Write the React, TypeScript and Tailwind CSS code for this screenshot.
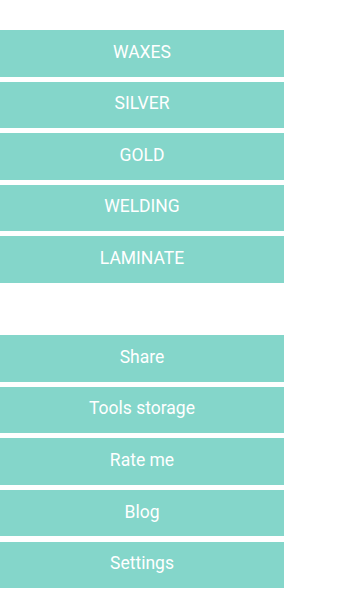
const groupA = ['WAXES', 'SILVER', 'GOLD', 'WELDING', 'LAMINATE'];
const groupB = ['Share', 'Tools storage', 'Rate me', 'Blog', 'Settings'];

function MenuButton({ label }: { label: string }) {
  return (
    <button className="w-[284px] h-[46.5px] bg-[#84d6ca] text-white text-[17.5px] flex items-center justify-center pb-[3px]">
      {label}
    </button>
  );
}

export default function App() {
  return (
    <div
      className="w-[355px] h-[592px] bg-white pt-[30px] flex flex-col"
      style={{ fontFamily: 'Roboto, "Noto Sans", sans-serif' }}
    >
      <div className="flex flex-col gap-[5.1px]">
        {groupA.map((l) => (
          <MenuButton key={l} label={l} />
        ))}
      </div>
      <div className="flex flex-col gap-[5.1px] mt-[52.3px]">
        {groupB.map((l) => (
          <MenuButton key={l} label={l} />
        ))}
      </div>
    </div>
  );
}
